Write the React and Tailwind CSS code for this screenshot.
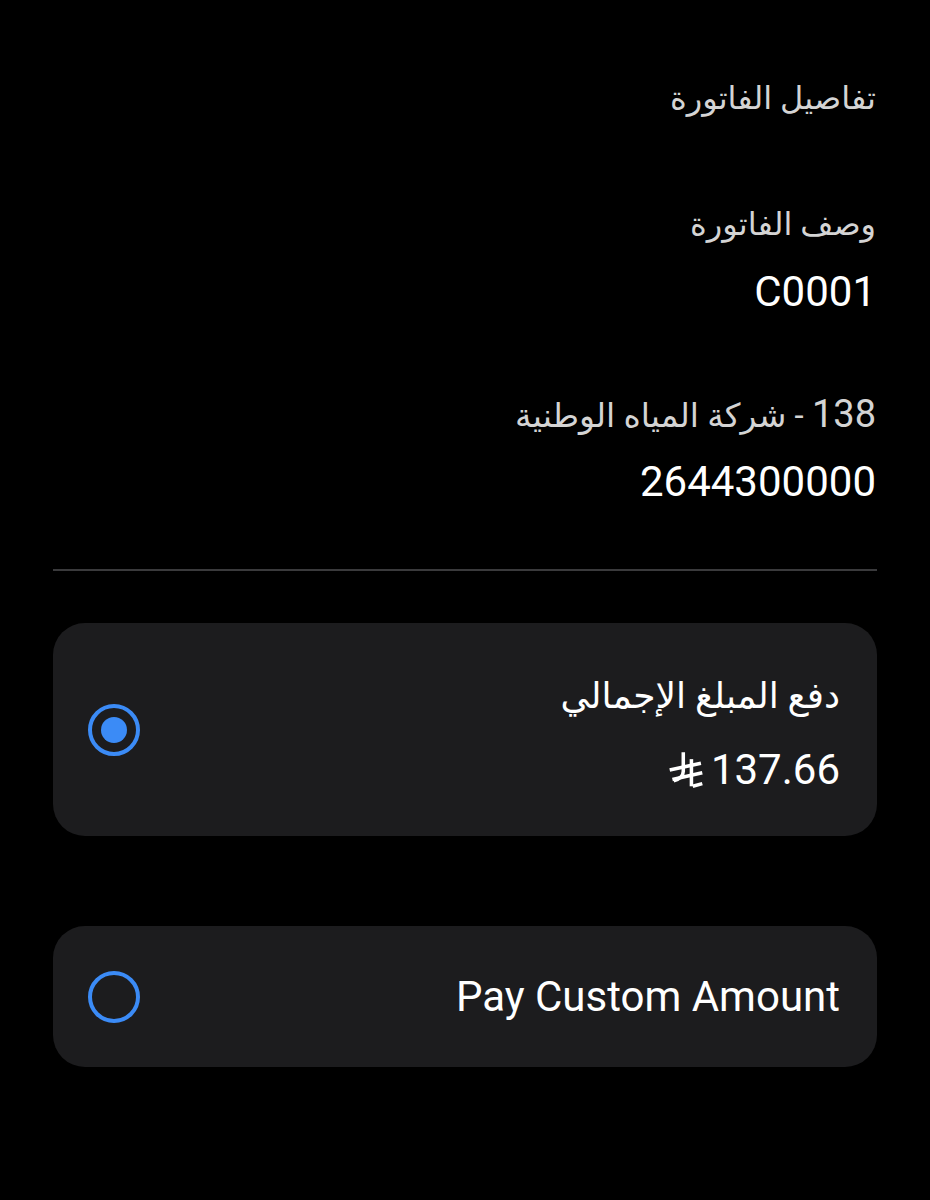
import React from 'react'

const RiyalSign = ({ className }) => (
	<svg viewBox="0 0 28 28" className={className} fill="none" stroke="currentColor" strokeWidth="2.6" strokeLinecap="butt">
		{/* left stem with hooked foot */}
		<path d="M12 1 V15 Q12 20 5 22" />
		{/* right stem */}
		<path d="M18 6 V26" />
		{/* slanted bars */}
		<path d="M2 14 L25 9" />
		<path d="M4 21 L26 16" />
		<path d="M19 26 L26 24" />
	</svg>
)

const Radio = ({ checked }) => (
	<div className="w-[52px] h-[52px] rounded-full border-[4px] border-[#3b8bf6] flex items-center justify-center shrink-0">
		{checked && <div className="w-[26px] h-[26px] rounded-full bg-[#3b8bf6]" />}
	</div>
)

export default function App() {
	return (
		<div
			className="min-h-[1200px] w-[930px] bg-black px-[53px] pt-[78px]"
			style={{ fontFamily: 'Roboto, "DejaVu Sans", sans-serif' }}
		>
			<div dir="rtl" className="text-right pr-[1px]">
				<h1 className="text-[32px] leading-[40px] text-[#d4d4d4] font-normal">تفاصيل الفاتورة</h1>

				<p className="mt-[86px] text-[32px] leading-[40px] text-[#d4d4d4]">وصف الفاتورة</p>
				<p className="mt-[26px] text-[42px] leading-[44px] text-white">C0001</p>

				<p className="mt-[78px] text-[33px] leading-[44px] text-[#d4d4d4]">
					<span className="text-[38px]">138</span> - شركة المياه الوطنية
				</p>
				<p className="mt-[21px] text-[42px] leading-[46px] text-white">2644300000</p>
			</div>

			<div className="mt-[64px] h-[2px] bg-[#3a3a3c]" />

			<div className="mt-[52px] h-[213px] rounded-[32px] bg-[#1c1c1e] flex items-center justify-between pl-[35px] pr-[37px]">
				<Radio checked />
				<div className="flex flex-col items-end gap-[30px] pt-[6px] text-white">
					<p dir="rtl" className="text-[36px] leading-[44px]">دفع المبلغ الإجمالي</p>
					<div className="flex items-center gap-[6px]">
						<RiyalSign className="w-[38px] h-[38px] text-white" />
						<span className="text-[42px] leading-[44px]">137.66</span>
					</div>
				</div>
			</div>

			<div className="mt-[90px] h-[141px] rounded-[32px] bg-[#1c1c1e] flex items-center justify-between pl-[35px] pr-[37px]">
				<Radio />
				<p className="text-[42px] leading-[44px] text-white">Pay Custom Amount</p>
			</div>
		</div>
	)
}
